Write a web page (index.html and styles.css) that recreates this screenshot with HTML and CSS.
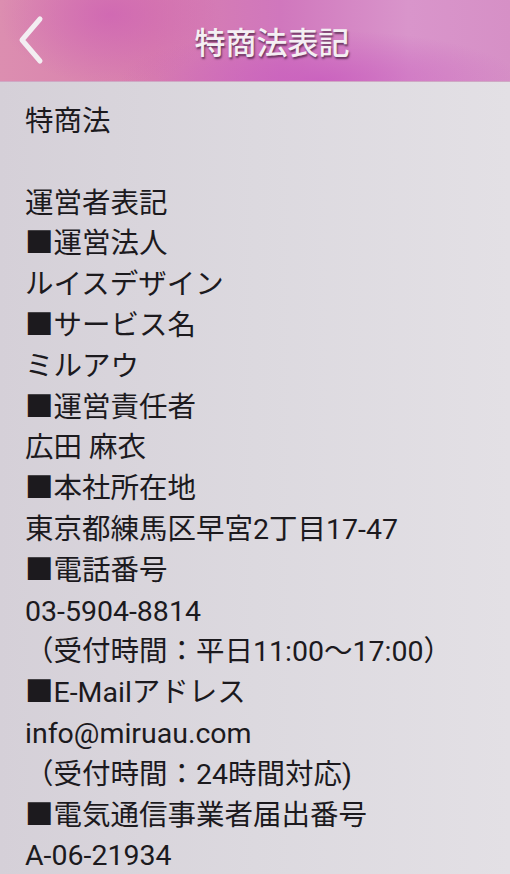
FILE: index.html
```html
<!DOCTYPE html>
<html lang="ja">
<head>
<meta charset="utf-8">
<link rel="stylesheet" href="styles.css">
</head>
<body>
<header class="bar">
  <svg class="back" viewBox="0 0 30 50" width="30" height="50"><polyline points="24,4 6,25 24,46" fill="none" stroke="#f3eef2" stroke-width="5" stroke-linecap="round" stroke-linejoin="round"/></svg>
  <h1 class="title">特商法表記</h1>
</header>
<main class="content">
  <p class="body">特商法<br><br>運営者表記<br>■運営法人<br>ルイスデザイン<br>■サービス名<br>ミルアウ<br>■運営責任者<br>広田 麻衣<br>■本社所在地<br>東京都練馬区早宮2丁目17-47<br>■電話番号<br>03-5904-8814<br>（受付時間：平日11:00～17:00）<br>■E-Mailアドレス<br>info@miruau.com<br>（受付時間：24時間対応)<br>■電気通信事業者届出番号<br>A-06-21934</p>
</main>
</body>
</html>
```
FILE: styles.css
```css
html, body {
  margin: 0;
  padding: 0;
}
body {
  width: 510px;
  height: 874px;
  overflow: hidden;
  font-family: Roboto, "Noto Sans CJK JP", sans-serif;
  background: linear-gradient(90deg, #d5d0d8 0%, #dcd9df 50%, #e3e0e5 100%);
}
.bar {
  position: relative;
  height: 81px;
  display: flex;
  align-items: center;
  justify-content: center;
  background:
    radial-gradient(ellipse 200px 50px at 320px 80px, rgba(200, 90, 190, 0.75), rgba(200, 90, 190, 0) 100%),
    radial-gradient(ellipse 110px 70px at 110px 15px, rgba(205, 95, 180, 0.7), rgba(205, 95, 180, 0) 100%),
    linear-gradient(90deg, #dc8eb0 0%, #d87fae 30%, #d077bd 55%, #d995cb 80%, #d690c6 100%);
  border-bottom: 1px solid #cfa8c4;
}
.back {
  position: absolute;
  left: 16px;
  top: 15px;
}
.title {
  margin: 0 0 0 34px;
  font-size: 31px;
  font-weight: 500;
  color: #f4eff3;
  text-shadow: 1px 2px 2px rgba(70, 30, 60, 0.75);
}
.content {
  padding: 0 0 0 25px;
}
.body {
  margin: 0;
  padding-top: 20px;
  font-size: 28.5px;
  line-height: 40.8px;
  color: #1c1a1e;
}
```
